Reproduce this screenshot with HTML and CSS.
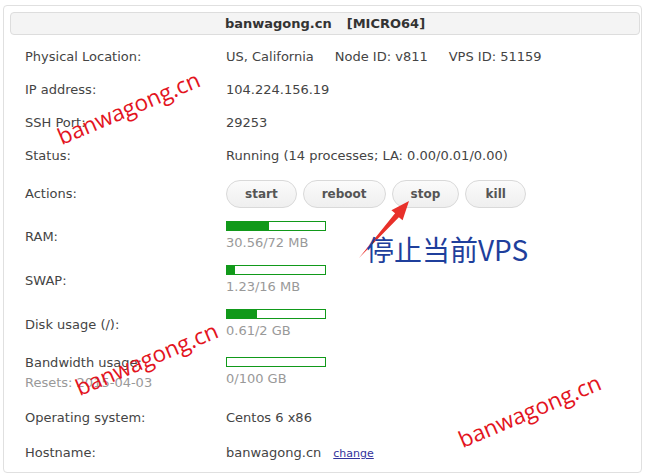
FILE: index.html
```html
<!DOCTYPE html>
<html>
<head>
<meta charset="utf-8">
<link rel="stylesheet" href="styles.css">
</head>
<body>
<div class="card">
  <div class="title">banwagong.cn<span class="plan">[MICRO64]</span></div>
  <div class="rows">
    <div class="row">
      <div class="label">Physical Location:</div>
      <div class="value"><span class="gap">US, California</span><span class="gap">Node ID: v811</span><span>VPS ID: 51159</span></div>
    </div>
    <div class="row">
      <div class="label">IP address:</div>
      <div class="value">104.224.156.19</div>
    </div>
    <div class="row">
      <div class="label">SSH Port:</div>
      <div class="value">29253</div>
    </div>
    <div class="row">
      <div class="label">Status:</div>
      <div class="value">Running (14 processes; LA: 0.00/0.01/0.00)</div>
    </div>
    <div class="row row-actions">
      <div class="label">Actions:</div>
      <div class="value buttons">
        <button class="btn">start</button>
        <button class="btn">reboot</button>
        <button class="btn">stop</button>
        <button class="btn">kill</button>
      </div>
    </div>
    <div class="row row-meter">
      <div class="label">RAM:</div>
      <div class="value">
        <div class="bar"><div class="fill" style="width:42.4%"></div></div>
        <div class="meter-text">30.56/72 MB</div>
      </div>
    </div>
    <div class="row row-meter">
      <div class="label">SWAP:</div>
      <div class="value">
        <div class="bar"><div class="fill" style="width:7.7%"></div></div>
        <div class="meter-text">1.23/16 MB</div>
      </div>
    </div>
    <div class="row row-meter">
      <div class="label">Disk usage (/):</div>
      <div class="value">
        <div class="bar"><div class="fill" style="width:30.5%"></div></div>
        <div class="meter-text">0.61/2 GB</div>
      </div>
    </div>
    <div class="row row-bw">
      <div class="label">Bandwidth usage:<div class="resets">Resets: 2015-04-03</div></div>
      <div class="value">
        <div class="bar"><div class="fill" style="width:0%"></div></div>
        <div class="meter-text">0/100 GB</div>
      </div>
    </div>
    <div class="row row-os">
      <div class="label">Operating system:</div>
      <div class="value">Centos 6 x86</div>
    </div>
    <div class="row row-host">
      <div class="label">Hostname:</div>
      <div class="value">banwagong.cn<a class="change" href="#">change</a></div>
    </div>
  </div>
</div>

<svg class="arrow" width="651" height="475" viewBox="0 0 651 475">
  <polygon points="359,258 395.1,213.2 391.4,210.2 409,201 402.6,220.3 398.9,217.2" fill="#e8302a"/>
</svg>
<div class="note">停止当前VPS</div>

<span class="wm wm1">banwagong.cn</span>
<span class="wm wm2">banwagong.cn</span>
<span class="wm wm3">banwagong.cn</span>
</body>
</html>
```

FILE: styles.css
```css
html, body {
  margin: 0;
  padding: 0;
  background: #ffffff;
}

body {
  font-family: "DejaVu Sans", "Liberation Sans", sans-serif;
  font-size: 13px;
  color: #444444;
  width: 651px;
  height: 475px;
  overflow: hidden;
}

.card {
  box-sizing: border-box;
  width: 639px;
  margin: 5px 0 0 3px;
  padding: 6px 1px 0 6px;
  border: 1px solid #e0e0e0;
  border-radius: 4px;
  height: 468px;
}

.title {
  box-sizing: border-box;
  height: 23px;
  line-height: 21px;
  background: #f4f4f4;
  border: 1px solid #dddddd;
  border-radius: 4px;
  text-align: center;
  font-weight: bold;
  color: #333333;
  font-size: 13px;
}

.plan {
  margin-left: 15px;
}

.rows {
  margin-top: 5px;
  padding-left: 15px;
}

.row {
  display: grid;
  grid-template-columns: 201px 1fr;
  align-items: center;
  height: 33px;
  box-sizing: border-box;
}

.gap {
  margin-right: 21px;
}

.row-actions {
  height: 43px;
}

.buttons {
  display: flex;
  gap: 6px;
}

.btn {
  box-sizing: border-box;
  height: 28px;
  min-width: 61px;
  padding: 0 18px;
  border: 1px solid #d9d9d9;
  border-radius: 14px;
  background: linear-gradient(#fbfbfb, #efefef);
  font-family: "DejaVu Sans", "Liberation Sans", sans-serif;
  font-size: 12px;
  font-weight: bold;
  color: #555555;
  line-height: 26px;
}

.row-meter {
  height: 44px;
  padding-top: 6px;
  align-items: start;
}

.row-meter .label {
  margin-top: 7px;
  line-height: 18px;
}

.row-bw {
  height: 53px;
  align-items: start;
}

.row-bw .label {
  margin-top: 6px;
  line-height: 20px;
}

.row-bw .value {
  margin-top: 10px;
}

.resets {
  color: #999999;
}

.bar {
  box-sizing: border-box;
  width: 100px;
  height: 10px;
  border: 1px solid #11991a;
  background: #ffffff;
}

.fill {
  height: 100%;
  background: #11991a;
}

.meter-text {
  margin-top: 3px;
  line-height: 18px;
  color: #999999;
}

.row-os {
  height: 34px;
}

.row-host {
  height: 37px;
}

.change {
  margin-left: 12px;
  font-size: 11px;
  color: #33339c;
  text-decoration: underline;
}

.arrow {
  position: absolute;
  left: 0;
  top: 0;
  pointer-events: none;
}

.note {
  position: absolute;
  left: 366px;
  top: 235px;
  font-family: "Noto Sans CJK SC", "Noto Sans", sans-serif;
  font-size: 28px;
  line-height: 28px;
  color: #1f3f9c;
  white-space: nowrap;
}

.wm {
  position: absolute;
  font-family: "Open Sans", "Noto Sans", sans-serif;
  font-size: 22.5px;
  line-height: 22px;
  height: 22px;
  color: #e3141e;
  white-space: nowrap;
  transform-origin: 0 100%;
  transform: rotate(-23deg);
}

.wm1 {
  left: 63px;
  top: 126px;
}

.wm2 {
  left: 81px;
  top: 377px;
}

.wm3 {
  left: 464px;
  top: 429px;
}
```
